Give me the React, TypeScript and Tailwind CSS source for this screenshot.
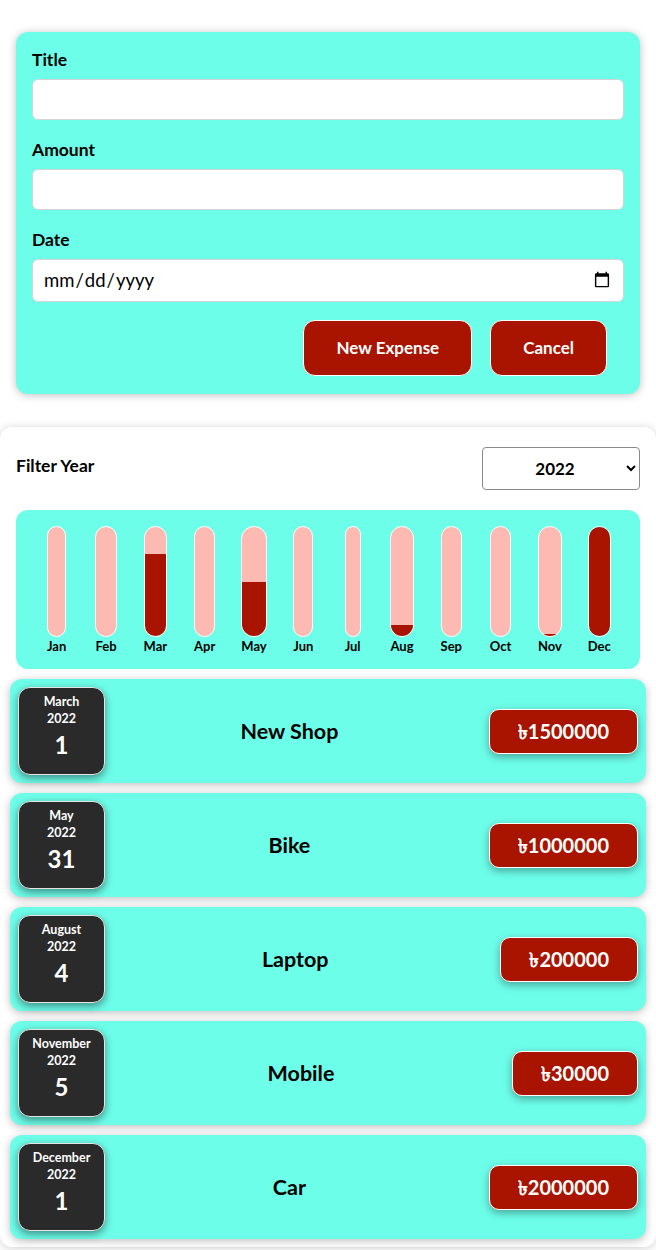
import React, { useState } from 'react';

type Expense = { id: number; title: string; amount: number; date: Date };

const months = ['Jan', 'Feb', 'Mar', 'Apr', 'May', 'Jun', 'Jul', 'Aug', 'Sep', 'Oct', 'Nov', 'Dec'];

const expenses: Expense[] = [
  { id: 1, title: 'New Shop', amount: 1500000, date: new Date(2022, 2, 1) },
  { id: 2, title: 'Bike', amount: 1000000, date: new Date(2022, 4, 31) },
  { id: 3, title: 'Laptop', amount: 200000, date: new Date(2022, 7, 4) },
  { id: 4, title: 'Mobile', amount: 30000, date: new Date(2022, 10, 5) },
  { id: 5, title: 'Car', amount: 2000000, date: new Date(2022, 11, 1) },
];

const ExpenseForm: React.FC = () => {
  const [title, setTitle] = useState('');
  const [amount, setAmount] = useState('');
  const [date, setDate] = useState('');

  return (
    <form className="mx-4 mt-8 rounded-xl bg-[#6dfeea] px-4 pt-4 pb-[18px] shadow-[0_1px_8px_rgba(0,0,0,0.25)]">
      <div className="flex flex-col gap-[18px]">
        <div>
          <label className="block mb-[7px] text-[17.5px] leading-6 font-bold text-black">Title</label>
          <input
            type="text"
            value={title}
            onChange={(e) => setTitle(e.target.value)}
            className="block w-full h-[41px] rounded-md border border-[#d4d4d4] bg-white px-[10px] text-[18px]"
          />
        </div>
        <div>
          <label className="block mb-[7px] text-[17.5px] leading-6 font-bold text-black">Amount</label>
          <input
            type="number"
            value={amount}
            onChange={(e) => setAmount(e.target.value)}
            className="block w-full h-[41px] rounded-md border border-[#d4d4d4] bg-white px-[10px] text-[18px]"
          />
        </div>
        <div>
          <label className="block mb-[7px] text-[17.5px] leading-6 font-bold text-black">Date</label>
          <input
            type="date"
            value={date}
            onChange={(e) => setDate(e.target.value)}
            className="block w-full h-[43px] rounded-md border border-[#d4d4d4] bg-white px-[10px] text-[18.5px] text-black"
          />
        </div>
      </div>
      <div className="mt-[18px] mr-[17px] flex justify-end gap-[18px]">
        <button type="submit" className="h-14 rounded-xl border border-white bg-[#a81400] px-8 text-[17px] font-bold text-white">
          New Expense
        </button>
        <button type="button" className="h-14 rounded-xl border border-white bg-[#a81400] px-8 text-[17px] font-bold text-white">
          Cancel
        </button>
      </div>
    </form>
  );
};

const Chart: React.FC<{ items: Expense[] }> = ({ items }) => {
  const totals = months.map((_, i) =>
    items.filter((e) => e.date.getMonth() === i).reduce((sum, e) => sum + e.amount, 0)
  );
  const max = Math.max(...totals);

  return (
    <div className="mx-[6px] flex rounded-xl bg-[#6dfeea] px-4 pt-4 pb-[15px]">
      {months.map((m, i) => (
        <div key={m} className="flex flex-1 justify-center">
          <div className="flex w-fit flex-col items-stretch">
            <div className="flex h-[111px] w-full flex-col justify-end overflow-hidden rounded-full border border-white bg-[#fdbab3]">
              <div className="w-full bg-[#a81400]" style={{ height: max ? `${(totals[i] / max) * 100}%` : '0%' }} />
            </div>
            <div className="mt-[1px] text-[13px] leading-4 font-bold text-black text-center">{m}</div>
          </div>
        </div>
      ))}
    </div>
  );
};

const ExpenseItem: React.FC<{ expense: Expense }> = ({ expense }) => {
  const month = expense.date.toLocaleString('en-US', { month: 'long' });
  const year = expense.date.getFullYear();
  const day = expense.date.getDate();

  return (
    <div className="flex items-center rounded-xl bg-[#6dfeea] p-2 shadow-[0_2px_8px_rgba(0,0,0,0.25)]">
      <div className="flex h-[88px] w-[87px] shrink-0 flex-col items-center rounded-xl border border-[#e5e5e5] bg-[#2a2a2a] pt-[5px] text-white shadow-[0_3px_8px_rgba(0,0,0,0.45)]">
        <div className="text-[12.5px] leading-[17px] font-bold">{month}</div>
        <div className="text-[12.5px] leading-[17px] font-bold">{year}</div>
        <div className="text-2xl leading-[36px] font-bold">{day}</div>
      </div>
      <h2 className="mr-[15px] flex-1 text-center text-[21.5px] font-bold text-black">{expense.title}</h2>
      <div className="flex h-[45px] items-center rounded-[10px] border border-white bg-[#a81400] px-[28px] text-xl font-bold text-white shadow-[0_3px_8px_rgba(0,0,0,0.35)]">
        ৳{expense.amount}
      </div>
    </div>
  );
};

export default function App() {
  const [year, setYear] = useState('2022');
  const filtered = expenses.filter((e) => e.date.getFullYear().toString() === year);

  return (
    <div className="min-h-screen bg-white pb-[2px] font-['Lato','Noto_Sans',sans-serif]">
      <ExpenseForm />
      <div className="mt-[33px] rounded-xl bg-white px-[10px] pt-5 pb-2 shadow-[0_1px_8px_rgba(0,0,0,0.2)]">
        <div className="mx-[6px] flex items-center justify-between">
          <label className="-mt-1 text-[17.5px] font-bold text-black">Filter Year</label>
          <select
            value={year}
            onChange={(e) => setYear(e.target.value)}
            className="h-[43px] w-[158px] rounded border border-[#8a8a8a] bg-white px-2 text-[17px] font-bold text-black text-center [text-align-last:center]"
          >
            <option value="2022">2022</option>
            <option value="2021">2021</option>
            <option value="2020">2020</option>
            <option value="2019">2019</option>
          </select>
        </div>
        <div className="mt-[20px]">
          <Chart items={filtered} />
        </div>
        <div className="mt-[10px] flex flex-col gap-[10px]">
          {filtered.map((e) => (
            <ExpenseItem key={e.id} expense={e} />
          ))}
        </div>
      </div>
    </div>
  );
}
